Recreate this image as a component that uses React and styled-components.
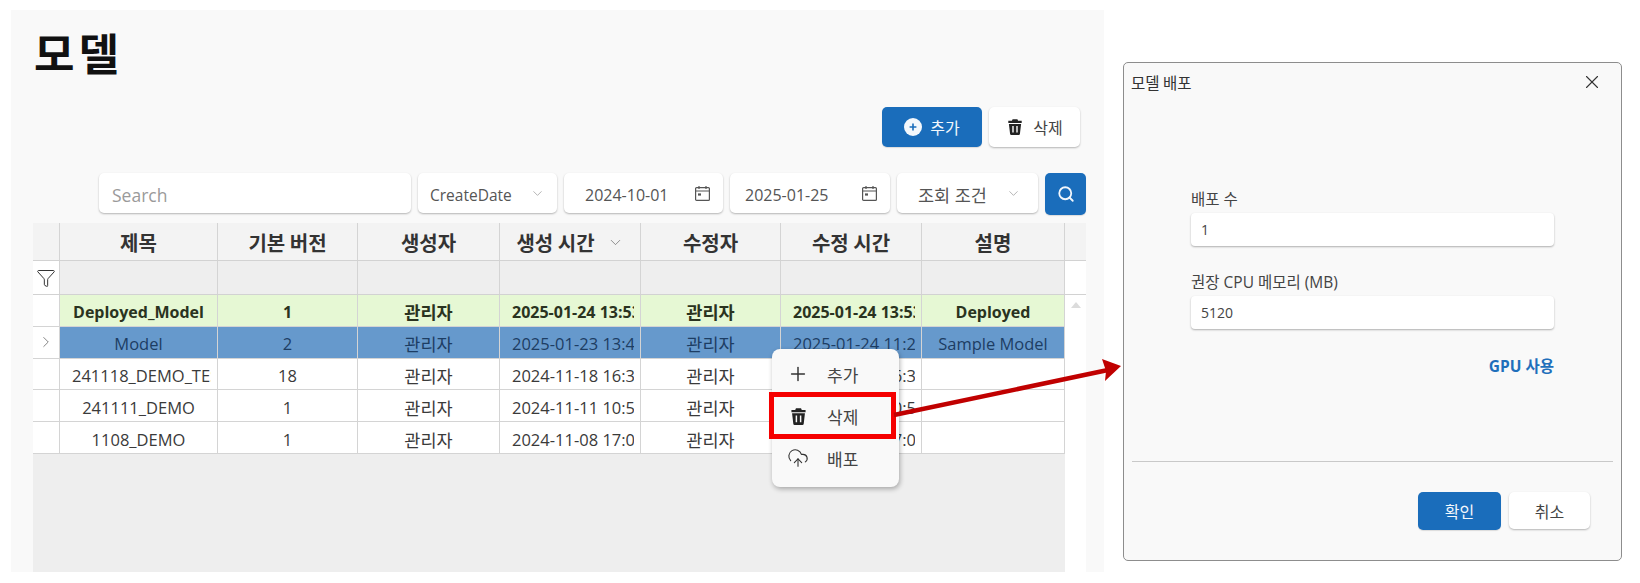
import React from "react";
import styled, { createGlobalStyle } from "styled-components";
import { Search as SearchIcon, ChevronDown, ChevronRight, Plus, X, CloudUpload, Funnel } from "lucide-react";

const Global = createGlobalStyle`
  html, body { margin: 0; padding: 0; background: #fff; }
  body { font-family: "Open Sans", "Noto Sans CJK KR", sans-serif; color: #333; overflow: hidden; }
  * { box-sizing: border-box; }
`;

const Page = styled.div`
  position: relative;
  width: 1640px;
  height: 583px;
  display: flex;
  align-items: flex-start;
  padding: 10px 0 0 11px;
`;

const Panel = styled.section`
  position: relative;
  width: 1093px;
  height: 562px;
  background: #f9f9f9;
  padding: 23px 18px 0 22px;
  display: flex;
  flex-direction: column;
`;

const Title = styled.h1`
  margin: 0 0 0 1px;
  height: 47px;
  font: 700 44px/38px "Noto Sans CJK KR", sans-serif;
  letter-spacing: 4px;
  color: #111;
`;

const Actions = styled.div`
  display: flex;
  justify-content: flex-end;
  gap: 7px;
  margin-top: 27px;
  padding-right: 6px;
`;

const Button = styled.button`
  height: ${(p) => p.$h || 40}px;
  width: ${(p) => p.$w}px;
  display: inline-flex;
  align-items: center;
  justify-content: center;
  gap: ${(p) => p.$gap || 8}px;
  border: none;
  border-radius: 5px;
  font: 400 16px "Noto Sans CJK KR", sans-serif;
  background: ${(p) => (p.$primary ? "#1a6dbb" : "#fff")};
  color: ${(p) => (p.$primary ? "#f2f7fc" : "#444")};
  box-shadow: ${(p) => (p.$primary ? "0 1px 1px rgba(0,0,0,.12)" : "0 1px 2px rgba(0,0,0,.28)")};
  padding: 0;
`;

const Toolbar = styled.div`
  display: flex;
  gap: 7px;
  margin-top: 26px;
  padding-left: 66px;
`;

const Field = styled.div`
  width: ${(p) => p.$w}px;
  height: 40px;
  display: flex;
  align-items: center;
  justify-content: space-between;
  padding: ${(p) => p.$pad || "0 12px"};
  background: #fff;
  border-radius: 5px;
  box-shadow: 0 1px 2px rgba(0,0,0,.28);
  color: ${(p) => (p.$muted ? "#9a9a9a" : "#555")};
  white-space: nowrap;
`;

const FieldText = styled.span`
  font: 400 ${(p) => p.$size}px "Open Sans", "Noto Sans CJK KR", sans-serif;
  padding-top: 3px;
`;

const Grid = styled.div`
  margin-top: 8px;
  width: 1053px;
  flex: 1;
  display: flex;
  flex-direction: column;
  min-height: 0;
`;

const COLS = "27px 158px 140px 142px 141px 140px 141px 143px 21px";

const HeadRow = styled.div`
  display: grid;
  grid-template-columns: ${COLS};
  height: ${(p) => p.$h}px;
  background: ${(p) => p.$bg};
  border-bottom: 1px solid #d2d2d2;
`;

const HeadCell = styled.div`
  display: flex;
  align-items: center;
  justify-content: center;
  gap: 12px;
  padding-top: 1px;
  border-right: 1px solid ${(p) => (p.$plain ? "transparent" : "#d4d4d4")};
  background: ${(p) => (p.$white ? "#fff" : "transparent")};
  font: 700 20px "Noto Sans CJK KR", sans-serif;
  color: #333;
`;

const BodyWrap = styled.div`
  flex: 1;
  display: flex;
  min-height: 0;
`;

const Rows = styled.div`
  flex: 1;
  background: #eeeeee;
`;

const ScrollTrack = styled.div`
  width: 23px;
  background: #fff;
  display: flex;
  justify-content: center;
  padding-top: 7px;
`;

const ScrollUp = styled.div`
  width: 0;
  height: 0;
  border-left: 5px solid transparent;
  border-right: 5px solid transparent;
  border-bottom: 6px solid #dcdcdc;
`;

const Row = styled.div`
  display: grid;
  grid-template-columns: 27px 158px 140px 142px 141px 140px 141px 143px;
  height: 31.8px;
  border-bottom: 1px solid #d4d4d4;
  background: #fff;
`;

const toneBg = { green: "#e6f8d4", blue: "#6699cc", plain: "#fff" };
const toneColor = { green: "#2a3320", blue: "#1d3d63", plain: "#3a3a3a" };

const Cell = styled.div`
  background: ${(p) => toneBg[p.$tone]};
  color: ${(p) => toneColor[p.$tone]};
  font-family: "Open Sans", "Noto Sans CJK KR", sans-serif;
  font-weight: ${(p) => (p.$tone === "green" ? 700 : 400)};
  font-size: ${(p) => (p.$ko ? 17.5 : p.$tone === "green" ? 16 : 16.5)}px;
  border-right: 1px solid #d4d4d4;
  padding: 3px 6px 0;
  display: flex;
  align-items: center;
  min-width: 0;
`;

const CellText = styled.span`
  display: block;
  width: 100%;
  padding: 0 6px;
  overflow: hidden;
  white-space: nowrap;
  text-align: center;
`;

const Gutter = styled.div`
  background: #fff;
  border-right: 1px solid #d4d4d4;
  display: flex;
  align-items: center;
  justify-content: center;
  color: #777;
`;

const Menu = styled.div`
  position: absolute;
  left: 761px;
  top: 339px;
  width: 127px;
  height: 138px;
  padding: 4px 0;
  background: #f9f9f9;
  border-radius: 8px;
  box-shadow: 1px 2px 5px rgba(0,0,0,.3);
`;

const MenuItem = styled.div`
  position: relative;
  height: 42px;
  display: flex;
  align-items: center;
  gap: 18px;
  padding-left: 15px;
  font: 400 17px "Noto Sans CJK KR", sans-serif;
  color: #444;
`;

const IconSlot = styled.span`
  width: 22px;
  display: inline-flex;
  justify-content: center;
  color: #333;
`;

const RedBox = styled.div`
  position: absolute;
  left: -3px;
  top: -3px;
  width: 127px;
  height: 47px;
  border: 5px solid #f50000;
`;

const Arrow = styled.svg`
  position: absolute;
  left: 890px;
  top: 350px;
`;

const Dialog = styled.section`
  margin: 52px 0 0 19px;
  width: 499px;
  height: 499px;
  background: #f9f9f9;
  border: 1px solid #8d8d8d;
  border-radius: 5px;
  display: flex;
  flex-direction: column;
`;

const DialogHead = styled.header`
  display: flex;
  align-items: center;
  justify-content: space-between;
  padding: 0 18px 2px 7px;
  height: 40px;
  font: 400 15.5px "Noto Sans CJK KR", sans-serif;
  color: #333;
`;

const DialogBody = styled.div`
  padding: 80px 67px 0 67px;
  flex: 1;
  display: flex;
  flex-direction: column;
`;

const Label = styled.label`
  height: 30px;
  display: flex;
  align-items: center;
  font: 400 15.5px "Open Sans", "Noto Sans CJK KR", sans-serif;
  color: #444;
  margin-top: ${(p) => p.$mt || 0}px;
`;

const Input = styled.div`
  height: 33px;
  padding: 0 10px;
  display: flex;
  align-items: center;
  background: #fff;
  border-radius: 4px;
  box-shadow: 0 1px 2px rgba(0,0,0,.3);
  font: 400 14px "Open Sans", sans-serif;
  color: #444;
`;

const GpuLink = styled.div`
  margin-top: 25px;
  text-align: right;
  font: 700 15.5px "Open Sans", "Noto Sans CJK KR", sans-serif;
  color: #1f6fbb;
`;

const Divider = styled.hr`
  margin: 0 8px;
  border: none;
  border-top: 1px solid #c9c9c9;
`;

const DialogFoot = styled.footer`
  height: 98px;
  display: flex;
  justify-content: flex-end;
  gap: 8px;
  padding: 30px 31px 0 0;
`;

const CalendarIcon = () => (
  <svg width="17" height="17" viewBox="0 0 17 17" fill="none" stroke="#555" strokeWidth="1.2">
    <rect x="1.6" y="2.6" width="13.8" height="12.8" rx="1" />
    <path d="M1.6 6h13.8M5 1v3M12 1v3" />
    <rect x="4" y="8.4" width="3" height="2.2" fill="#555" stroke="none" />
  </svg>
);

const TrashIcon = ({ size = 18 }) => (
  <svg width={size} height={size} viewBox="0 0 18 18">
    <path fill="#222" d="M6.6 1.2h4.8l.7 1.6h3.6v2.1H2.3V2.8h3.6zM2.9 5.9h12.2l-1.2 10.1a1.2 1.2 0 0 1-1.2 1H5.3a1.2 1.2 0 0 1-1.2-1z" />
    <path stroke="#f9f9f9" strokeWidth="1.4" d="M7 8v6.5M11 8v6.5" />
  </svg>
);

const PlusCircle = () => (
  <svg width="18" height="18" viewBox="0 0 18 18">
    <circle cx="9" cy="9" r="9" fill="#f4f8fc" />
    <path d="M9 5.6v6.8M5.6 9h6.8" stroke="#1a6dbb" strokeWidth="1.6" />
  </svg>
);

const rows = [
  { tone: "green", c: ["Deployed_Model", "1", "관리자", "2025-01-24 13:53:21", "관리자", "2025-01-24 13:53:21", "Deployed"] },
  { tone: "blue", mark: true, c: ["Model", "2", "관리자", "2025-01-23 13:41:07", "관리자", "2025-01-24 11:28:40", "Sample Model"] },
  { tone: "plain", c: ["241118_DEMO_TEST", "18", "관리자", "2024-11-18 16:33:12", "관리자", "2024-11-18 16:33:12", ""] },
  { tone: "plain", c: ["241111_DEMO", "1", "관리자", "2024-11-11 10:53:45", "관리자", "2024-11-11 10:53:45", ""] },
  { tone: "plain", c: ["1108_DEMO", "1", "관리자", "2024-11-08 17:02:18", "관리자", "2024-11-08 17:02:18", ""] },
];

const headers = ["제목", "기본 버전", "생성자", "생성 시간", "수정자", "수정 시간", "설명"];

export default function App() {
  return (
    <Page>
      <Global />
      <Panel>
        <Title>모델</Title>
        <Actions>
          <Button $primary $w={100}><PlusCircle />추가</Button>
          <Button $w={91} $gap={9}><TrashIcon />삭제</Button>
        </Actions>
        <Toolbar>
          <Field $w={312} $muted $pad="0 13px"><FieldText $size={17.5}>Search</FieldText></Field>
          <Field $w={139}><FieldText $size={15.5}>CreateDate</FieldText><ChevronDown size={15} strokeWidth={1} color="#888" /></Field>
          <Field $w={159} $pad="0 12px 0 21px"><FieldText $size={16}>2024-10-01</FieldText><CalendarIcon /></Field>
          <Field $w={160} $pad="0 12px 0 15px"><FieldText $size={16}>2025-01-25</FieldText><CalendarIcon /></Field>
          <Field $w={141} $pad="0 17px 0 21px"><FieldText $size={17.5}>조회 조건</FieldText><ChevronDown size={15} strokeWidth={1} color="#888" /></Field>
          <Button $primary $w={41} $h={42}><SearchIcon size={18} strokeWidth={2.4} /></Button>
        </Toolbar>
        <Grid>
          <HeadRow $h={38} $bg="#f3f3f3">
            <HeadCell />
            {headers.map((h) => (
              <HeadCell key={h}>
                {h}
                {h === "생성 시간" && <ChevronDown size={17} strokeWidth={1} color="#666" />}
              </HeadCell>
            ))}
            <HeadCell $plain />
          </HeadRow>
          <HeadRow $h={34} $bg="#eeeeee">
            <HeadCell $white><Funnel size={20} strokeWidth={1.2} color="#333" /></HeadCell>
            {headers.map((h) => <HeadCell key={h} />)}
            <HeadCell $plain $white />
          </HeadRow>
          <BodyWrap>
            <Rows>
              {rows.map((r) => (
                <Row key={r.c[0]}>
                  <Gutter>{r.mark && <ChevronRight size={18} strokeWidth={1.2} />}</Gutter>
                  {r.c.map((v, i) => (
                    <Cell key={i} $tone={r.tone} $ko={v === "관리자"}><CellText>{v}</CellText></Cell>
                  ))}
                </Row>
              ))}
            </Rows>
            <ScrollTrack><ScrollUp /></ScrollTrack>
          </BodyWrap>
        </Grid>
        <Menu>
          <MenuItem><IconSlot><Plus size={24} strokeWidth={1.6} /></IconSlot>추가</MenuItem>
          <MenuItem><IconSlot><TrashIcon size={19} /></IconSlot>삭제<RedBox /></MenuItem>
          <MenuItem><IconSlot><CloudUpload size={22} strokeWidth={1.2} /></IconSlot>배포</MenuItem>
        </Menu>
      </Panel>
      <Dialog>
        <DialogHead>
          모델 배포
          <X size={22} strokeWidth={1.2} color="#333" />
        </DialogHead>
        <DialogBody>
          <Label>배포 수</Label>
          <Input>1</Input>
          <Label $mt={20}>권장 CPU 메모리 (MB)</Label>
          <Input>5120</Input>
          <GpuLink>GPU 사용</GpuLink>
        </DialogBody>
        <Divider />
        <DialogFoot>
          <Button $primary $w={83} $h={38}>확인</Button>
          <Button $w={81} $h={37}>취소</Button>
        </DialogFoot>
      </Dialog>
      <Arrow width="235" height="70" viewBox="0 0 235 70">
        <path d="M4 65 L218 20" stroke="#c00000" strokeWidth="4.5" fill="none" />
        <path d="M231 16 L212 9 L216 21 L215 31 Z" fill="#c00000" />
      </Arrow>
    </Page>
  );
}
